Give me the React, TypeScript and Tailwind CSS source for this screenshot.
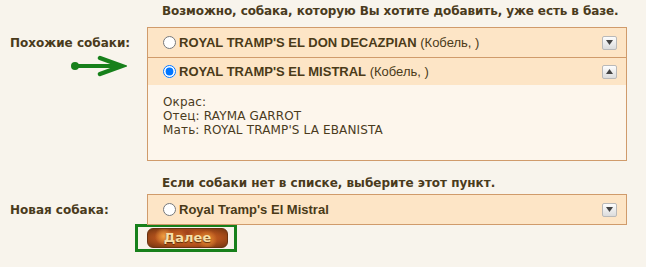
import React from "react";

const Arrow = ({ up }: { up?: boolean }) => (
  <span className="flex h-[14px] w-[15px] items-center justify-center rounded-[2px] border border-[#b9b9b9] bg-gradient-to-b from-[#fdfdfd] to-[#dcdcdc]">
    <svg width="7" height="5" viewBox="0 0 7 5">
      {up ? <polygon points="0,5 7,5 3.5,0" fill="#444" /> : <polygon points="0,0 7,0 3.5,5" fill="#444" />}
    </svg>
  </span>
);

const DogRow = ({
  name,
  extra,
  checked,
  up,
  className,
}: {
  name: string;
  extra?: string;
  checked?: boolean;
  up?: boolean;
  className: string;
}) => (
  <div className={`flex items-center bg-[#fde5c6] pl-[15px] pr-[9px] ${className}`}>
    <input type="radio" name="dog" defaultChecked={checked} className="m-0 h-[13px] w-[13px]" />
    <span className="ml-[3px] flex-1 font-['Liberation_Sans',Arial,sans-serif] text-[13px] text-[#4a3a18]">
      <b>{name}</b>
      {extra && <span> {extra}</span>}
    </span>
    <Arrow up={up} />
  </div>
);

export default function App() {
  return (
    <div className="h-[267px] w-[646px] overflow-hidden bg-[#f8f4ec] font-['DejaVu_Sans',Verdana,sans-serif] text-[#4a3b1c]">
      {/* Header */}
      <div className="pl-[162px] pt-[3px] text-[12px] font-bold leading-[16px] tracking-[-0.1px]">
        Возможно, собака, которую Вы хотите добавить, уже есть в базе.
      </div>

      {/* Similar dogs */}
      <div className="mt-[8px] flex">
        <div className="flex w-[147px] flex-col">
          <div className="mt-[8px] pl-[10px] text-[12px] font-bold leading-[16px]">Похожие собаки:</div>
          <svg width="58" height="22" viewBox="0 0 58 22" className="ml-[69px] mt-[4px]">
            <circle cx="6" cy="11" r="4" fill="#17801b" />
            <line x1="6" y1="11" x2="50" y2="11" stroke="#17801b" strokeWidth="4" />
            <polyline points="31,3 53,11 31,19" fill="none" stroke="#17801b" strokeWidth="4.5" strokeLinejoin="miter" strokeLinecap="round" />
          </svg>
        </div>
        <div className="w-[480px] border border-[#d09b6b] bg-[#fdf6ec]">
          <DogRow name="ROYAL TRAMP'S EL DON DECAZPIAN" extra="(Кобель, )" className="h-[30px] border-b border-[#d09b6b]" />
          <DogRow name="ROYAL TRAMP'S EL MISTRAL" extra="(Кобель, )" checked up className="h-[27px]" />
          <div className="h-[75px] pl-[15px] pt-[10px] text-[12px] leading-[14px] tracking-[0.15px]">
            <div>Окрас:</div>
            <div>Отец: RAYMA GARROT</div>
            <div>Мать: ROYAL TRAMP'S LA EBANISTA</div>
          </div>
        </div>
      </div>

      {/* Not in list */}
      <div className="mt-[14px] pl-[162px] text-[12px] font-bold leading-[16px]">
        Если собаки нет в списке, выберите этот пункт.
      </div>

      <div className="mt-[3px] flex items-center">
        <div className="w-[147px] pl-[10px] text-[12px] font-bold leading-[16px]">Новая собака:</div>
        <div className="w-[480px] border border-[#d09b6b]">
          <DogRow name="Royal Tramp's El Mistral" className="h-[29px]" />
        </div>
      </div>

      {/* Button */}
      <div className="ml-[135px] mt-[-1px] flex h-[28px] w-[102px] items-center border-[3px] border-[#17801b] pl-[9px]">
        <button className="flex h-[20px] w-[81px] items-center justify-center rounded-[6px] border border-[#6a3210] bg-[radial-gradient(circle_at_20%_40%,#f0a040_0,transparent_9px),radial-gradient(circle_at_75%_60%,#e89034_0,transparent_10px),radial-gradient(circle_at_50%_20%,#a0401a_0,transparent_8px),radial-gradient(ellipse_at_center,#d8782a_0%,#b4521c_55%,#723410_100%)] font-['DejaVu_Sans',Verdana,sans-serif] text-[13px] font-bold text-[#f8dfa8] [text-shadow:0_1px_1px_#5a2a08]">
          Далее
        </button>
      </div>
    </div>
  );
}
